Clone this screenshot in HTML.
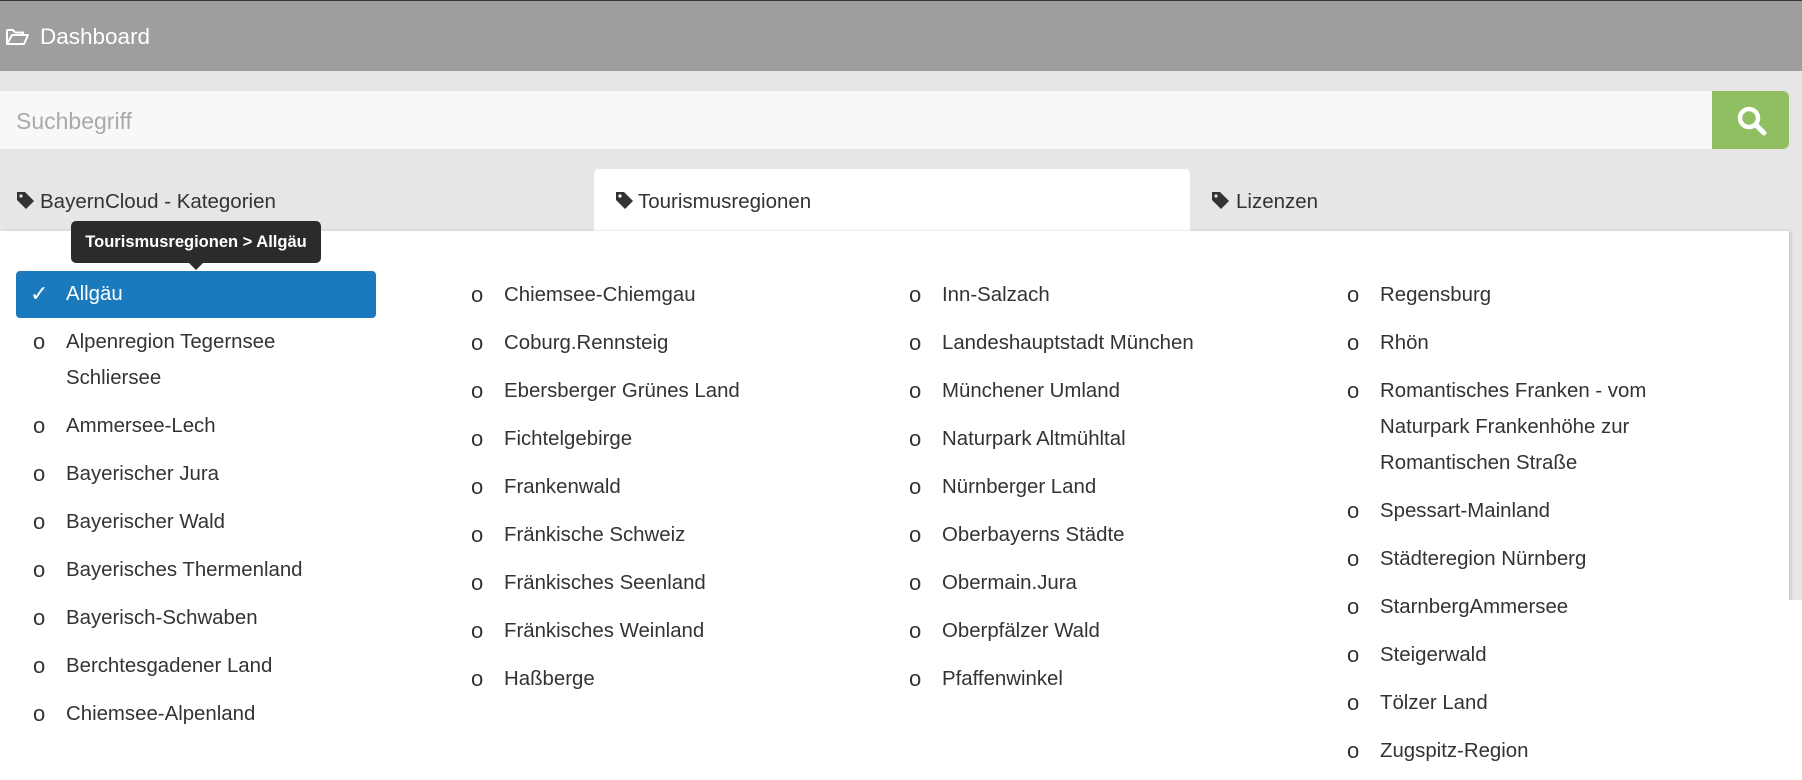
<!DOCTYPE html>
<html><head><meta charset="utf-8">
<style>
*{margin:0;padding:0;box-sizing:border-box}
html,body{width:1802px;height:780px;overflow:hidden;background:#e6e6e6;font-family:"Liberation Sans",sans-serif;color:#333}
.hdr{position:absolute;left:0;top:0;width:1802px;height:71px;background:#9e9e9e;border-top:1px solid #333}
.hdr .t{position:absolute;left:40px;top:22px;font-size:22.5px;color:#fff;line-height:28px}
.hdr svg{position:absolute;left:5px;top:27px}
.search{position:absolute;left:0;top:91px;width:1712px;height:58px;background:#f8f8f8}
.search span{position:absolute;left:16px;top:17px;font-size:23px;color:#aaa;line-height:26px}
.btn{position:absolute;left:1712px;top:91px;width:77px;height:58px;background:#8fbf60;border-radius:0 6px 6px 0}
.btn svg{position:absolute;left:24px;top:14px}
.tab{position:absolute;top:169px;height:62px;font-size:20.5px;line-height:62px}
.tab svg{position:absolute;left:0;top:22px}
.tab span{position:absolute;top:2px}
.act{background:#fff;border-radius:5px 5px 0 0}
.panel{position:absolute;left:0;top:231px;width:1789px;height:549px;background:#fff;box-shadow:2px 0 3px rgba(0,0,0,.15)}
.strip{position:absolute;left:1789px;top:600px;width:13px;height:180px;background:#fff}
ul{position:absolute;top:271px;list-style:none;width:380px}
li{position:relative;padding:6px 0 6px 50px;line-height:36px;font-size:20.4px;white-space:nowrap}
li:before{content:"o";position:absolute;left:17px;top:6px;font-size:22px}
li.sel{background:#1a7abd;color:#fff;border-radius:4px;width:360px;height:47px;padding-top:5px}
li.sel:before{content:"✓";left:14px;top:5px;font-size:22px}
.tip{position:absolute;left:71px;top:221px;width:250px;height:42px;background:#2b2b2b;border-radius:5px;color:#fff;font-weight:bold;font-size:16.5px;line-height:42px;text-align:center}
.tip:after{content:"";position:absolute;left:118px;top:42px;border:7px solid transparent;border-top-color:#2b2b2b;border-bottom:0}
</style></head><body>
<div class="hdr">
<svg width="24" height="18" viewBox="0 0 24 18"><path d="M2 2h6l2 2.5h8v3M2 2v14h17l4-9H7L2 16" fill="none" stroke="#fff" stroke-width="2" stroke-linejoin="round"/></svg>
<div class="t">Dashboard</div></div>
<div class="search"><span>Suchbegriff</span></div>
<div class="btn"><svg width="32" height="32" viewBox="0 0 32 32"><circle cx="13" cy="13" r="9" fill="none" stroke="#fff" stroke-width="4.5"/><path d="M20 20l8 8" stroke="#fff" stroke-width="5" stroke-linecap="round"/></svg></div>
<div class="tab" style="left:16px;width:560px"><svg width="19" height="19" viewBox="0 0 19 19"><path d="M1 1h8l9 9-8 8-9-9z" fill="#333"/><circle cx="5" cy="5" r="1.6" fill="#e6e6e6"/></svg><span style="left:24px">BayernCloud - Kategorien</span></div>
<div class="tab act" style="left:594px;width:596px"><svg style="left:21px" width="19" height="19" viewBox="0 0 19 19"><path d="M1 1h8l9 9-8 8-9-9z" fill="#333"/><circle cx="5" cy="5" r="1.6" fill="#fff"/></svg><span style="left:44px">Tourismusregionen</span></div>
<div class="tab" style="left:1211px;width:300px"><svg width="19" height="19" viewBox="0 0 19 19"><path d="M1 1h8l9 9-8 8-9-9z" fill="#333"/><circle cx="5" cy="5" r="1.6" fill="#e6e6e6"/></svg><span style="left:25px">Lizenzen</span></div>
<div class="panel"></div><div class="strip"></div>
<ul style="left:16px">
<li class="sel">Allgäu</li>
<li>Alpenregion Tegernsee<br>Schliersee</li>
<li>Ammersee-Lech</li>
<li>Bayerischer Jura</li>
<li>Bayerischer Wald</li>
<li>Bayerisches Thermenland</li>
<li>Bayerisch-Schwaben</li>
<li>Berchtesgadener Land</li>
<li>Chiemsee-Alpenland</li>
</ul>
<ul style="left:454px">
<li>Chiemsee-Chiemgau</li>
<li>Coburg.Rennsteig</li>
<li>Ebersberger Grünes Land</li>
<li>Fichtelgebirge</li>
<li>Frankenwald</li>
<li>Fränkische Schweiz</li>
<li>Fränkisches Seenland</li>
<li>Fränkisches Weinland</li>
<li>Haßberge</li>
</ul>
<ul style="left:892px">
<li>Inn-Salzach</li>
<li>Landeshauptstadt München</li>
<li>Münchener Umland</li>
<li>Naturpark Altmühltal</li>
<li>Nürnberger Land</li>
<li>Oberbayerns Städte</li>
<li>Obermain.Jura</li>
<li>Oberpfälzer Wald</li>
<li>Pfaffenwinkel</li>
</ul>
<ul style="left:1330px">
<li>Regensburg</li>
<li>Rhön</li>
<li>Romantisches Franken - vom<br>Naturpark Frankenhöhe zur<br>Romantischen Straße</li>
<li>Spessart-Mainland</li>
<li>Städteregion Nürnberg</li>
<li>StarnbergAmmersee</li>
<li>Steigerwald</li>
<li>Tölzer Land</li>
<li>Zugspitz-Region</li>
</ul>
<div class="tip">Tourismusregionen &gt; Allgäu</div>
</body></html>
